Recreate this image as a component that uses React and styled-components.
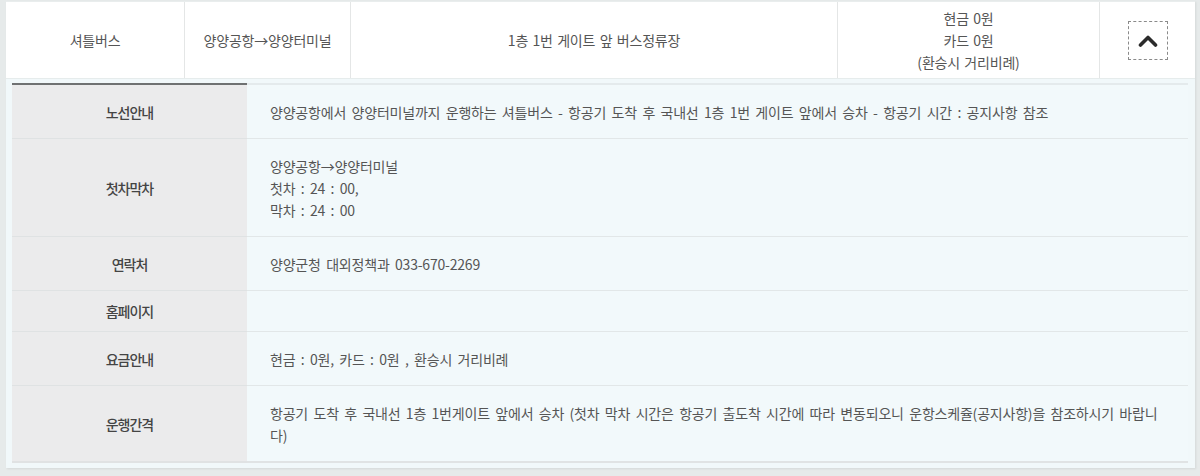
import React from 'react'
import styled, { createGlobalStyle } from 'styled-components'

const GlobalStyle = createGlobalStyle`
  body {
    margin: 0;
    background: #e6eaea;
    font-family: "Noto Sans CJK KR", "Noto Sans", sans-serif;
    font-size: 14px;
    color: #555;
  }
`

const details = [
  { label: '노선안내', lines: ['양양공항에서 양양터미널까지 운행하는 셔틀버스 - 항공기 도착 후 국내선 1층 1번 게이트 앞에서 승차 - 항공기 시간 : 공지사항 참조'] },
  { label: '첫차막차', lines: ['양양공항→양양터미널', '첫차 : 24 : 00,', '막차 : 24 : 00'] },
  { label: '연락처', lines: ['양양군청 대외정책과 033-670-2269'] },
  { label: '홈페이지', lines: [] },
  { label: '요금안내', lines: ['현금 : 0원, 카드 : 0원 , 환승시 거리비례'] },
  { label: '운행간격', lines: ['항공기 도착 후 국내선 1층 1번게이트 앞에서 승차 (첫차 막차 시간은 항공기 출도착 시간에 따라 변동되오니 운항스케쥴(공지사항)을 참조하시기 바랍니다)'] },
]

function App() {
  return (
    <Page>
      <GlobalStyle />
      <Card>
        <Summary>
          <Cell>셔틀버스</Cell>
          <Cell>양양공항→양양터미널</Cell>
          <Cell>1층 1번 게이트 앞 버스정류장</Cell>
          <Cell>
            <div>현금 0원</div>
            <div>카드 0원</div>
            <div>(환승시 거리비례)</div>
          </Cell>
          <Cell $last>
            <Toggle aria-label="접기">
              <svg width="20" height="13" viewBox="0 0 20 13">
                <polyline points="2.5,11 10,3.5 17.5,11" fill="none" stroke="#2b2b2b" strokeWidth="3.6" strokeLinecap="round" strokeLinejoin="round" />
              </svg>
            </Toggle>
          </Cell>
        </Summary>
        <Detail>
          <InfoTable>
            {details.map((row, i) => (
              <React.Fragment key={row.label}>
                <Label $first={i === 0} $lastRow={i === details.length - 1}>{row.label}</Label>
                <Value $first={i === 0} $lastRow={i === details.length - 1}>
                  {row.lines.map((line) => (
                    <div key={line}>{line}</div>
                  ))}
                </Value>
              </React.Fragment>
            ))}
          </InfoTable>
        </Detail>
      </Card>
    </Page>
  )
}

export default App

const Page = styled.div`
  padding: 1px 5px 7px 6px;
`

const Card = styled.div`
  background: #fff;
  box-shadow: 1px 1px 2px rgba(0, 0, 0, 0.08);
`

const Summary = styled.div`
  display: grid;
  grid-template-columns: 179px 166px 487px 262px 1fr;
  height: 76px;
  border-top: 1px solid #e9eded;
`

const Cell = styled.div`
  display: flex;
  flex-direction: column;
  align-items: center;
  justify-content: center;
  text-align: center;
  line-height: 22px;
  letter-spacing: -0.2px;
  word-spacing: 1.5px;
  color: #555;
  border-right: ${(p) => (p.$last ? 'none' : '1px solid #e4e6e6')};
`

const Toggle = styled.button`
  width: 40px;
  height: 39px;
  margin-left: 1px;
  padding: 0;
  border: 1px dashed #8a8a8a;
  background: #fff;
  display: flex;
  align-items: center;
  justify-content: center;
`

const Detail = styled.div`
  background: #f1f8fa;
  border-top: 1px solid #e6ecec;
  padding: 4px 7px 5px 6px;
`

const InfoTable = styled.div`
  display: grid;
  grid-template-columns: 235px 1fr;
`

const Label = styled.div`
  display: flex;
  align-items: center;
  justify-content: center;
  padding: 9px;
  line-height: 22px;
  background: #ebebec;
  color: #444;
  font-weight: 500;
  letter-spacing: -1px;
  border-top: ${(p) => (p.$first ? '2px solid #6f7172' : 'none')};
  border-bottom: ${(p) => (p.$lastRow ? '2px solid #e0e2e3' : '1px solid #dfe2e3')};
`

const Value = styled.div`
  padding: 16px 22px 15px 23px;
  line-height: 22px;
  background: #f2f9fb;
  color: #555;
  letter-spacing: -0.2px;
  word-spacing: 2.5px;
  border-top: ${(p) => (p.$first ? '2px solid #e4eaec' : 'none')};
  border-bottom: ${(p) => (p.$lastRow ? '2px solid #e0e3e4' : '1px solid #e2e7e8')};
`
